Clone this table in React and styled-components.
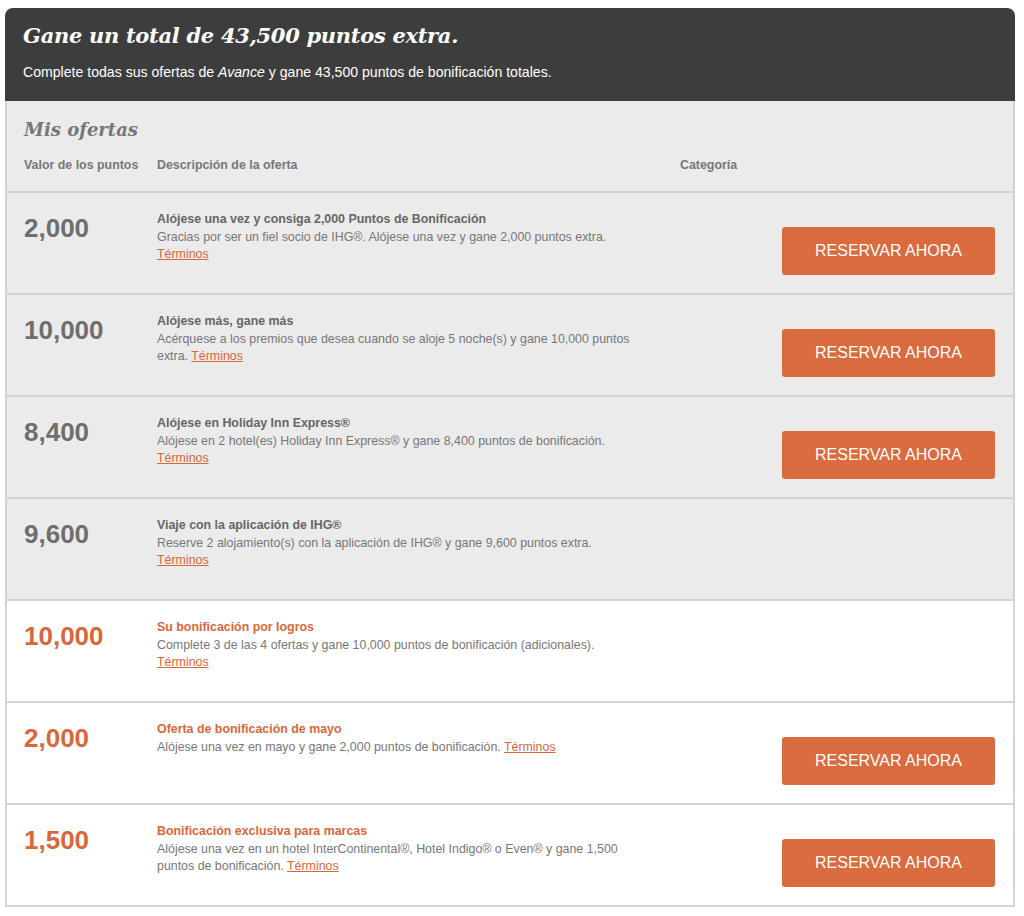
import React from 'react';
import styled, {createGlobalStyle} from 'styled-components';

const GlobalStyle = createGlobalStyle`
  body {
    margin: 0;
    background: #ffffff;
    font-family: "Liberation Sans", Arial, sans-serif;
  }
`;

const Page = styled.div`
  padding: 8px 9px 10px 5px;
`;

const Banner = styled.div`
  background: #3d3d3d;
  border-radius: 8px 8px 0 0;
  padding: 13px 18px 20px 18px;
  color: #ffffff;
`;

const BannerTitle = styled.h1`
  margin: 0 0 12px 0;
  font-family: "DejaVu Serif", Georgia, serif;
  font-style: italic;
  font-weight: bold;
  font-size: 21px;
  line-height: 30px;
  letter-spacing: -0.3px;
`;

const BannerText = styled.p`
  margin: 0;
  font-size: 14.1px;
  line-height: 18px;
`;

const Offers = styled.div`
  border-left: 2px solid #d3d3d3;
  border-right: 2px solid #d3d3d3;
`;

const OffersHead = styled.div`
  background: #ebebeb;
  padding: 17px 0 18px 17px;
  border-bottom: 2px solid #d3d3d3;
`;

const SectionTitle = styled.h2`
  margin: 0 0 15px 0;
  font-family: "DejaVu Serif", Georgia, serif;
  font-style: italic;
  font-weight: bold;
  font-size: 18px;
  line-height: 24px;
  color: #777777;
`;

const Columns = styled.div`
  display: grid;
  grid-template-columns: 133px 523px 102px 213px;
`;

const ColLabel = styled.div`
  font-size: 12.4px;
  font-weight: bold;
  line-height: 16px;
  color: #777777;
`;

const Row = styled.div`
  display: grid;
  grid-template-columns: 133px 523px 102px 213px;
  align-items: start;
  box-sizing: border-box;
  height: 102px;
  padding: 18px 18px 0 17px;
  background: ${p => (p.$active ? '#ffffff' : '#ebebeb')};
  border-bottom: 2px solid #d3d3d3;
`;

const Points = styled.div`
  margin-top: 2px;
  font-size: 26px;
  font-weight: bold;
  line-height: 30px;
  color: ${p => (p.$active ? '#d9673b' : '#6e6e6e')};
`;

const Info = styled.div`
  max-width: 482px;
  font-size: 12.4px;
  line-height: 17px;
`;

const OfferTitle = styled.div`
  font-weight: bold;
  margin-bottom: 1px;
  color: ${p => (p.$active ? '#d9673b' : '#666666')};
`;

const OfferText = styled.p`
  margin: 0;
  color: #777777;
`;

const Terms = styled.a`
  color: #d9673b;
  text-decoration: underline;
  cursor: pointer;
`;

const Category = styled.div``;

const BookButton = styled.button`
  grid-column: 4;
  margin-top: 16px;
  height: 48px;
  border: none;
  border-radius: 3px;
  background: #d96b3e;
  color: #ffffff;
  font-family: "Liberation Sans", Arial, sans-serif;
  font-size: 16px;
  text-transform: uppercase;
  cursor: pointer;
`;

const offers = [
    {
        points: '2,000',
        title: 'Alójese una vez y consiga 2,000 Puntos de Bonificación',
        text: 'Gracias por ser un fiel socio de IHG®. Alójese una vez y gane 2,000 puntos extra.',
        book: true,
    },
    {
        points: '10,000',
        title: 'Alójese más, gane más',
        text: 'Acérquese a los premios que desea cuando se aloje 5 noche(s) y gane 10,000 puntos extra.',
        book: true,
    },
    {
        points: '8,400',
        title: 'Alójese en Holiday Inn Express®',
        text: 'Alójese en 2 hotel(es) Holiday Inn Express® y gane 8,400 puntos de bonificación.',
        book: true,
    },
    {
        points: '9,600',
        title: 'Viaje con la aplicación de IHG®',
        text: 'Reserve 2 alojamiento(s) con la aplicación de IHG® y gane 9,600 puntos extra.',
        book: false,
    },
    {
        points: '10,000',
        title: 'Su bonificación por logros',
        text: 'Complete 3 de las 4 ofertas y gane 10,000 puntos de bonificación (adicionales).',
        active: true,
        book: false,
    },
    {
        points: '2,000',
        title: 'Oferta de bonificación de mayo',
        text: 'Alójese una vez en mayo y gane 2,000 puntos de bonificación.',
        active: true,
        book: true,
    },
    {
        points: '1,500',
        title: 'Bonificación exclusiva para marcas',
        text: 'Alójese una vez en un hotel InterContinental®, Hotel Indigo® o Even® y gane 1,500 puntos de bonificación.',
        active: true,
        book: true,
    },
];

const App = () => {
    return (
        <Page>
            <GlobalStyle/>
            <Banner>
                <BannerTitle>Gane un total de 43,500 puntos extra.</BannerTitle>
                <BannerText>
                    Complete todas sus ofertas de <em>Avance</em> y gane 43,500 puntos de bonificación totales.
                </BannerText>
            </Banner>
            <Offers>
                <OffersHead>
                    <SectionTitle>Mis ofertas</SectionTitle>
                    <Columns>
                        <ColLabel>Valor de los puntos</ColLabel>
                        <ColLabel>Descripción de la oferta</ColLabel>
                        <ColLabel>Categoría</ColLabel>
                    </Columns>
                </OffersHead>
                {offers.map((offer, i) => (
                    <Row key={i} $active={offer.active}>
                        <Points $active={offer.active}>{offer.points}</Points>
                        <Info>
                            <OfferTitle $active={offer.active}>{offer.title}</OfferTitle>
                            <OfferText>
                                {offer.text} <Terms>Términos</Terms>
                            </OfferText>
                        </Info>
                        <Category/>
                        {offer.book && <BookButton>Reservar ahora</BookButton>}
                    </Row>
                ))}
            </Offers>
        </Page>
    );
};

export default App;
